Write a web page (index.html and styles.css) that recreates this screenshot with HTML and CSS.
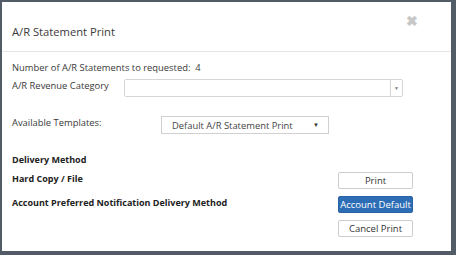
FILE: index.html
```html
<!DOCTYPE html>
<html lang="en">
<head>
    <meta charset="UTF-8">
    <title>A/R Statement Print</title>
    <link rel="stylesheet" href="styles.css">
</head>
<body>
    <div class="modal">
        <div class="modal-header">
            <h4 class="modal-title">A/R Statement Print</h4>
            <span class="close">&#10006;</span>
        </div>
        <div class="modal-body">
            <div class="row count">Number of A/R Statements to requested:&nbsp; 4</div>

            <div class="row field">
                <label class="label">A/R Revenue Category</label>
                <div class="combo">
                    <span class="combo-text"></span>
                    <span class="combo-arrow">&#9660;</span>
                </div>
            </div>

            <div class="row field templates">
                <label class="label">Available Templates:</label>
                <div class="select">
                    <span>Default A/R Statement Print</span>
                    <span class="select-arrow">&#9660;</span>
                </div>
            </div>

            <div class="row heading">Delivery Method</div>

            <div class="delivery">
                <div class="heading">Hard Copy / File</div>
                <button class="btn">Print</button>
                <div class="heading">Account Preferred Notification Delivery Method</div>
                <button class="btn btn-primary">Account Default</button>
                <div></div>
                <button class="btn">Cancel Print</button>
            </div>
        </div>
    </div>
</body>
</html>
```

FILE: styles.css
```css
* {
    margin: 0;
    padding: 0;
    box-sizing: border-box;
    font-family: 'Open Sans', sans-serif;
}

body {
    width: 456px;
    height: 255px;
    background-color: #515c67;
    overflow: hidden;
}

.modal {
    margin: 2px 0 0 2px;
    width: 449px;
    height: 249px;
    background-color: #fff;
    color: #3a3a3a;
}

/* Header */
.modal-header {
    height: 50px;
    display: flex;
    align-items: center;
    justify-content: space-between;
    padding: 0 33px 0 10px;
    border-bottom: 1px solid #e5e5e5;
}

.modal-title {
    font-size: 11.2px;
    font-weight: 400;
    padding-top: 10px;
}

.close {
    align-self: flex-start;
    margin-top: 9px;
    font-size: 14px;
    font-weight: 700;
    color: #c7c7c7;
}

/* Body */
.modal-body {
    padding: 8px 0 0 10px;
    font-size: 9.4px;
}

.row {
    display: flex;
    align-items: flex-start;
}

.count {
    height: 16px;
    line-height: 16px;
}

.label {
    width: 112px;
    line-height: 14px;
}

.field {
    margin-top: 3px;
}

.templates {
    margin-top: 19px;
}

.templates .label {
    width: 149px;
}

.combo {
    width: 279px;
    height: 18px;
    display: flex;
    border: 1px solid #d6d6d6;
    border-radius: 2px;
}

.combo-text {
    flex: 1;
}

.combo-arrow {
    width: 12px;
    border-left: 1px solid #d6d6d6;
    font-size: 5px;
    color: #777;
    display: flex;
    align-items: center;
    justify-content: center;
}

.select {
    width: 168px;
    height: 18px;
    display: flex;
    align-items: center;
    justify-content: space-between;
    padding: 0 9px 0 10px;
    border: 1px solid #d0d0d0;
    color: #444;
}

.select-arrow {
    font-size: 6px;
    color: #333;
}

.heading {
    font-weight: 700;
    font-size: 9px;
    line-height: 14px;
    color: #222;
}

.row.heading {
    margin-top: 19px;
}

.delivery {
    display: grid;
    grid-template-columns: 326px 75px;
    grid-auto-rows: 17px;
    row-gap: 7px;
    margin-top: 5px;
}

.btn {
    height: 17px;
    padding: 0;
    white-space: nowrap;
    background-color: #fff;
    border: 1px solid #ccc;
    border-radius: 2px;
    font-size: 9.5px;
    color: #333;
}

.btn-primary {
    background-color: #2d6db5;
    border-color: #2a63a5;
    color: #fff;
}
```
